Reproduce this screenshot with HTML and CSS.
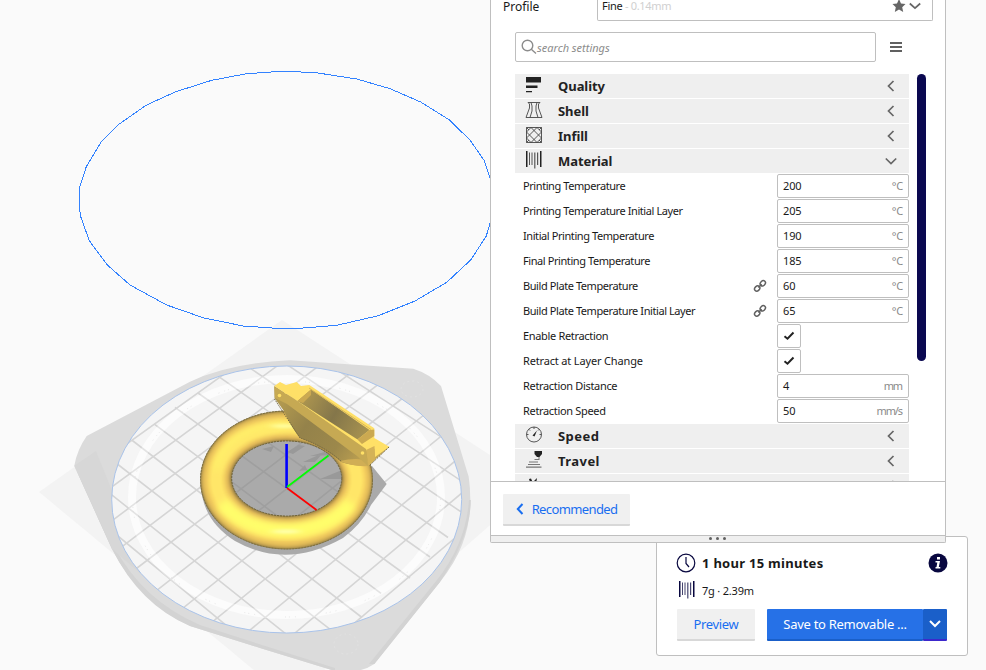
FILE: index.html
```html
<!DOCTYPE html>
<html lang="en">
<head>
<meta charset="utf-8">
<title>Print settings</title>
<link rel="stylesheet" href="styles.css">
</head>
<body>
<main class="app">
<svg class="scene" width="986" height="670" viewBox="0 0 986 670">
  <defs>
    <clipPath id="plate"><ellipse cx="286.7" cy="499.5" rx="175" ry="133.5"/></clipPath>
    <clipPath id="ring"><ellipse cx="286.5" cy="480" rx="86.3" ry="69.3"/></clipPath>
    <clipPath id="hole"><ellipse cx="286.7" cy="478.5" rx="55" ry="37.6"/></clipPath>
    <filter id="soft"><feGaussianBlur stdDeviation="1.2"/></filter>
    <filter id="softer" x="-20%" y="-40%" width="140%" height="180%"><feGaussianBlur stdDeviation="3.5"/></filter>
    <filter id="glow" x="-50%" y="-150%" width="200%" height="400%"><feGaussianBlur stdDeviation="5 1.5"/></filter>
    <linearGradient id="body" gradientUnits="userSpaceOnUse" x1="285" y1="400" x2="372" y2="462">
      <stop offset="0" stop-color="#b0984f"/><stop offset=".3" stop-color="#94824a"/><stop offset=".65" stop-color="#9c884b"/><stop offset="1" stop-color="#c7a853"/>
    </linearGradient>
    <linearGradient id="pocket" gradientUnits="userSpaceOnUse" x1="300" y1="398" x2="366" y2="436">
      <stop offset="0" stop-color="#b09850"/><stop offset=".5" stop-color="#84764a"/><stop offset="1" stop-color="#a89350"/>
    </linearGradient>
  </defs>
  <polygon fill="#f3f3f3" points="282,320 39,492 290,700 536,485"/>
  <polygon class="volume" points="79.3,188.3 86.3,166.7 101.3,141.7 119.3,124 146,105.3 175,92 211.7,80.3 246.7,73.7 276.7,71.6 292.7,71.6 316,72.7 356.7,79 390,88.7 420.7,102 449,119.7 470,140 484.3,160.7 492,184 494,200 490,223.3 486.3,236 470.7,260 446.7,282.3 415,301 378.3,315.7 336.7,325.3 303.3,328 272,328 243.3,326 204,318 166.7,305 130,285 107.3,265 89.3,240.7 80.7,216.7 79.3,206.7"/>
  <path fill="#dbdbdb" d="M74.3 465.7Q77 450 86.7 436L190 381.7Q230 363 290 360.3L413.3 368.7Q430 374 441 386L468.7 476.7Q474 515 462 545Q455 563 440 582L374.3 664Q360 674 335 671L260 648 190 626Q140 603 112 549Z"/>
  <path fill="#d3d3d3" d="M74.3 465.7L112 549Q140 605 190 626L260 648 335 671V668L262 645 200 625Q142 600 114 546Z"/>
  <path fill="#d3d3d3" d="M470.8 500Q471 535 440 582L374.3 664 369 664 437 580Q466 543 469 500Z"/>
  <polygon fill="#d7d7d7" points="74.3,465.7 96,451 148,580 112,549"/>
  <g clip-path="url(#plate)">
    <rect x="110" y="364" width="354" height="272" fill="#f5f5f5"/>
    <ellipse class="band" cx="286.5" cy="497" rx="154.500" ry="118"/>
    <g class="grid">
      <path d="M84 508L289 677.200M107 491L313.500 656M117.300 464L336.500 634.300M131.700 440L362 617.500M154 423.800L381 593.400M175 407.300L410 578M198 393L430 557M217 375.400L448 537.500M241.700 362.400L470 518M260 346.700L470 486.700M303 348L480 462"/>
      <path d="M108 457.500L254 352.700M105 491.900L285 360.200M105 526L332 356M110 555.800L370 358.400M120 581L410 360.300M130 611.300L440 369M155 630.500L460 386M190 640L470 412.800M235 642.400L475 444.700M270 654L475 482M310 660.700L480 516.800"/>
    </g>
    <ellipse class="glint" cx="286.5" cy="497" rx="154.500" ry="118"/>
    <ellipse cx="286.5" cy="499" rx="154" ry="118" fill="none" stroke="#dedede" stroke-width=".7" stroke-dasharray="1 5 1 3 1 30"/>
  </g>
  <ellipse class="plate-edge" cx="286.7" cy="499.5" rx="175" ry="133.5"/>
  <g class="marks">
    <ellipse cx="412" cy="389" rx="11" ry="8"/><ellipse cx="346" cy="644" rx="12" ry="10"/>
  </g>
  <path fill="#aaa" d="M201 485Q202 520 235 541 286 570 343 538 362 524 371 505L386.7 484 372 466Z"/>
  <g clip-path="url(#ring)">
    <rect x="199" y="409" width="175" height="142" fill="#7d7044"/>
    <g filter="url(#soft)">
      <ellipse cx="286.500" cy="480" rx="85.800" ry="68.800" fill="#bd9c4e"/>
      <ellipse cx="286.500" cy="479.900" rx="84.300" ry="67" fill="#dbb656"/>
      <ellipse cx="286.500" cy="479.900" rx="82" ry="64.500" fill="#eec65c"/>
      <ellipse cx="286.500" cy="479.800" rx="79" ry="61.500" fill="#fad862"/>
      <ellipse cx="286.500" cy="479.800" rx="76" ry="58.500" fill="#ffe667"/>
      <ellipse cx="286.500" cy="479.400" rx="64.500" ry="47" fill="#f8d762"/>
      <ellipse cx="286.500" cy="479" rx="61.500" ry="44" fill="#e8c05a"/>
      <ellipse cx="286.600" cy="478.800" rx="58.500" ry="41" fill="#c7a250"/>
      <ellipse cx="286.600" cy="478.600" rx="56.300" ry="38.700" fill="#8a7845"/>
    </g>
    <path d="M222 503Q244 530 286 530Q329 530 351 503" fill="none" stroke="#ffff6b" stroke-width="13" filter="url(#softer)"/>
    <path d="M216 470Q226 426 286 425" fill="none" stroke="#fff069" stroke-width="7" filter="url(#softer)"/>
    <ellipse cx="286" cy="531.500" rx="14" ry="2" fill="#ffffb0" filter="url(#glow)"/>
    <ellipse cx="285" cy="426" rx="14" ry="2" fill="#ffffa0" filter="url(#glow)"/>
  </g>
  <g clip-path="url(#hole)">
    <rect x="230" y="440" width="114" height="78" fill="#aaa"/>
    <g class="grid-dark"><path d="M198 393L430 557M175 407.300L410 578M217 375.400L448 537.500M154 423.800L381 593.400M120 581L410 360.300M130 611.300L440 369M110 555.800L370 358.400M155 630.500L460 386"/></g>
    <path fill="#999" d="M262 449l12-3-3 6zM287 452l12-7 6 1-12 8zM303 462l20-9-8 9zM299 471l6-6 2 5zM320 479l22-9v9zM310 456l22-6 2 5z"/>
  </g>
  <ellipse cx="286.700" cy="478.500" rx="55" ry="37.600" fill="none" stroke="#6d623b" stroke-width="1" stroke-dasharray="2 1"/>
  <ellipse cx="286.500" cy="480" rx="86" ry="69" fill="none" stroke="#7d7044" stroke-width="1" stroke-dasharray="2 1"/>
  <path fill="url(#body)" d="M274.3 386L368 449 374 448.500 389.3 446.700 368 466Q352 466 341 462 325 447 300 438 291 427 284 411L274.500 398Z"/>
  <path fill="#d0ae55" d="M340 461Q356 457 370 461L368.500 466Q352 467 340 461Z"/>
  <path fill="#ffe067" d="M274.3 386L280 382 286 385 296.700 382 301 386 309.300 385 374.300 428.300 374.300 438 389.300 446.700 375 457 374.300 448 368 452 360 446 297 401Z"/>
  <path fill="#c6a953" d="M274.3 386.500L293 398 366 449 368 466 357 456 287 404 275 398Z"/>
  <path fill="#d4b257" d="M366 450L374.500 446 375 460 368.500 466Z"/>
  <path fill="url(#pocket)" d="M297.500 401L311 389.500 369.500 430 357.500 439.500Z"/>
  <path fill="#cba951" d="M297.500 401L311 389.500V395L303 403ZM357.500 439.500L369.500 430 374.300 429.500V436L362 444Z"/>
  <path fill="none" stroke="#d9b657" d="M309 388L371 429.500"/>
  <g fill="#ffe067"><circle cx="279.500" cy="395.500" r="1.800"/><circle cx="362.500" cy="453" r="1.800"/><circle cx="287" cy="391" r="3"/></g>
  <path fill="none" stroke="#736640" stroke-dasharray="1.500 1" d="M274.500 399L300 438Q324 446 341 461M389 447L369 466"/>
  <g fill="none"><path stroke="#00f" stroke-width="2.600" d="M286.600 444V488"/><path stroke="#0f0" stroke-width="1.700" d="M287 487L328.500 455.500"/><path stroke="#f00" stroke-width="1.700" d="M287 488L316.500 510"/></g>
</svg>

<section class="job">
  <div class="job-head">
    <svg class="clock" width="20" height="20" viewBox="0 0 20 20"><circle cx="10" cy="10" r="8.800"/><path d="M10 4V10.500L13 14"/></svg>
    <strong>1 hour 15 minutes</strong>
    <svg class="info" width="20" height="20" viewBox="0 0 20 20"><circle cx="10" cy="10" r="9.500" fill="#08073f"/><path d="M9 4h3v2.500H9zM7.500 8H12l-1.200 6H12.300v1.500H7.500V14h1L9.300 9.500H7.500z" fill="#fff"/></svg>
  </div>
  <div class="job-use">
    <svg class="navy" width="18" height="18" viewBox="0 0 18 18"><use href="#spool"/></svg><span>7g · 2.39m</span>
  </div>
  <div class="job-actions">
    <button class="btn preview">Preview</button>
    <div class="save"><button class="btn save-main">Save to Removable ...</button><button class="btn save-more" aria-label="More"><svg width="12" height="8" viewBox="0 0 12 8"><path d="M1 1L6 6L11 1"/></svg></button></div>
  </div>
</section>

<section class="panel">
  <div class="profile">
    <span class="profile-label">Profile</span>
    <div class="select"><span>Fine <i>- 0.14mm</i></span>
      <svg width="30" height="14" viewBox="0 0 30 14"><path fill="#666" d="M7 0l2 4.500 4.500.5L10.200 8.200 11.200 13 7 10.500 2.800 13 3.800 8.200.5 5 5 4.500z"/><path class="chev" d="M17.800 4.500L23 9.200L28.200 4.500"/></svg></div>
  </div>
  <div class="search-row">
    <div class="search"><svg width="16" height="16" viewBox="0 0 16 16"><circle cx="6.500" cy="6.500" r="5.300"/><path d="M10.300 10.300L15 14.500"/></svg><span>search settings</span></div>
    <div class="burger"><b></b><b></b><b></b></div>
  </div>
  <div class="body">
    <div class="list">
      <div class="cat"><svg width="18" height="18" viewBox="0 0 18 18"><path fill="#222" d="M1 1h15v5.500H1zM1 9.500h11.500V12H1zM1 15h6v1.200H1z"/></svg><span>Quality</span><svg class="arrow" width="14" height="14" viewBox="0 0 14 14"><path d="M9.500 2L4.500 7L9.500 12"/></svg></div>
      <div class="cat"><svg class="line" width="18" height="18" viewBox="0 0 18 18"><path d="M3 1.500H15M3 1.500L4.500 3V7L1 16.500H5L7 10V5L6 1.500M15 1.500L13.500 3V7L17 16.500H13L11 10V5L12 1.500M5 16.500H13"/></svg><span>Shell</span><svg class="arrow" width="14" height="14" viewBox="0 0 14 14"><path d="M9.500 2L4.500 7L9.500 12"/></svg></div>
      <div class="cat"><svg class="line" width="18" height="18" viewBox="0 0 18 18"><path d="M1.500 1.500H16.500V16.500H1.500ZM1.500 6L6 1.500L16.500 12L12 16.500L1.500 6M12 1.500L16.500 6L6 16.500L1.500 12L12 1.500M1.500 1.500L4 4M16.500 1.500L14 4M1.500 16.500L4 14M16.500 16.500L14 14"/></svg><span>Infill</span><svg class="arrow" width="14" height="14" viewBox="0 0 14 14"><path d="M9.500 2L4.500 7L9.500 12"/></svg></div>
      <div class="cat"><svg width="18" height="18" viewBox="0 0 18 18"><g id="spool" fill="currentColor"><path d="M1 0h1.500v16H1zM15 0h1.500v16H15z"/><path opacity=".75" d="M4 1.500h1V14H4zM6.500 1.500h1V14h-1zM9.200 1.500h1.200V17.500H9.200zM12 1.500h1.200V14H12z"/></g></svg><span>Material</span><svg class="arrow" width="14" height="14" viewBox="0 0 14 14"><path d="M1.800 4.500L7 9.500L12.200 4.500"/></svg></div>
      <div class="row tight"><label>Printing Temperature</label><div class="field">200<em>°C</em></div></div>
      <div class="row tight"><label>Printing Temperature Initial Layer</label><div class="field">205<em>°C</em></div></div>
      <div class="row tight"><label>Initial Printing Temperature</label><div class="field">190<em>°C</em></div></div>
      <div class="row tight"><label>Final Printing Temperature</label><div class="field">185<em>°C</em></div></div>
      <div class="row tight"><label>Build Plate Temperature</label><svg class="link" width="14" height="14" viewBox="0 0 14 14"><ellipse cx="4.200" cy="9.500" rx="2.900" ry="2.300" transform="rotate(-45 4.200 9.500)"/><ellipse cx="9.800" cy="4.300" rx="2.900" ry="2.300" transform="rotate(-45 9.800 4.300)"/><path d="M5.300 8.500L8.700 5.300"/></svg><div class="field">60<em>°C</em></div></div>
      <div class="row tight"><label>Build Plate Temperature Initial Layer</label><svg class="link" width="14" height="14" viewBox="0 0 14 14"><ellipse cx="4.200" cy="9.500" rx="2.900" ry="2.300" transform="rotate(-45 4.200 9.500)"/><ellipse cx="9.800" cy="4.300" rx="2.900" ry="2.300" transform="rotate(-45 9.800 4.300)"/><path d="M5.300 8.500L8.700 5.300"/></svg><div class="field">65<em>°C</em></div></div>
      <div class="row"><label>Enable Retraction</label><div class="check"><svg width="12" height="10" viewBox="0 0 12 10"><path d="M1.500 5.200L4.500 7.700L10.500 1.500"/></svg></div></div>
      <div class="row loose"><label>Retract at Layer Change</label><div class="check"><svg width="12" height="10" viewBox="0 0 12 10"><path d="M1.500 5.200L4.500 7.700L10.500 1.500"/></svg></div></div>
      <div class="row"><label>Retraction Distance</label><div class="field">4<em class="wide">mm</em></div></div>
      <div class="row"><label>Retraction Speed</label><div class="field">50<em class="wide">mm/s</em></div></div>
      <div class="cat airy"><svg class="line" width="18" height="18" viewBox="0 0 18 18"><circle cx="9" cy="8.500" r="7.500"/><path d="M9 1V3M3.700 3.200L5 4.500M1.500 8.500H3.500M16.500 8.500H14.500M14.300 3.200L13 4.500"/><path fill="#222" stroke="none" d="M7.500 9.500L12 4.500L9.500 10.500z"/></svg><span>Speed</span><svg class="arrow" width="14" height="14" viewBox="0 0 14 14"><path d="M9.500 2L4.500 7L9.500 12"/></svg></div>
      <div class="cat airy"><svg width="18" height="18" viewBox="0 0 18 18"><path fill="#222" d="M9.500 0H17v3l-2.500 3h-2.500l-2.500-3z"/><path fill="#777" d="M9.500 8h4V6h1v3h-5zM4 10.500h9v1H4zM3 13h12v1H3zM1 15.500h15.500v1.200H1z"/></svg><span>Travel</span><svg class="arrow" width="14" height="14" viewBox="0 0 14 14"><path d="M9.500 2L4.500 7L9.500 12"/></svg></div>
      <div class="cat"><svg width="18" height="18" viewBox="0 0 18 18"><path fill="#222" d="M4 3l2-.5 2 4.500v2H6zM9 5l3-3-.5 3L10 8z"/></svg><span></span><svg class="arrow" width="14" height="14" viewBox="0 0 14 14"><path d="M9.500 2L4.500 7L9.500 12"/></svg></div>
    </div>
    <div class="scroll"></div>
  </div>
  <div class="foot"><button class="btn back"><svg width="8" height="12" viewBox="0 0 8 12"><path d="M6.500 1L1.800 6L6.500 11"/></svg>Recommended</button></div>
  <div class="grip"><b></b><b></b><b></b></div>
</section>
</main>
</body>
</html>
```

FILE: styles.css
```css
* { box-sizing: border-box; }
body { margin: 0; overflow: hidden; background: #fafafa; font-family: "Noto Sans", sans-serif; color: #191919; }
.app { position: relative; width: 986px; height: 670px; overflow: hidden; }
svg { display: block; flex: none; }
.scene { position: absolute; left: 0; top: 0; }
.volume { fill: none; stroke: #3282ff; stroke-width: 1; shape-rendering: crispEdges; }
.band { fill: none; stroke: #fafafa; stroke-width: 8; }
.glint { fill: none; stroke: #fff; stroke-opacity: .35; stroke-width: 8; }
.grid { fill: none; stroke: #d5d5d5; stroke-width: 1.6; }
.grid-dark { fill: none; stroke: #9f9f9f; stroke-width: 1.6; }
.plate-edge { fill: none; stroke: #a9c3ea; stroke-width: 1; }
.marks { fill: none; stroke: #e2e2e2; stroke-width: .8; stroke-dasharray: 2 3; }

.btn { border: 0; padding: 0; border-radius: 1px; background: #f0f0f0; border-bottom: 2px solid #d8d8d8; color: #196ef0; font: 13px "Noto Sans", sans-serif; height: 32px; display: flex; align-items: center; justify-content: center; }
.btn svg, .chev, .arrow { fill: none; stroke: #196ef0; stroke-width: 2; }

.job { position: absolute; left: 656px; top: 536px; width: 312px; height: 120px; background: #fff; border: 1px solid #bfbfbf; border-radius: 3px; padding: 16px 20px 0; }
.job-head { display: flex; align-items: center; height: 20px; margin: 0 -1px; }
.job-head strong { font-size: 13px; margin-left: 6px; flex: 1; letter-spacing: .28px; }
.clock { fill: none; stroke: #08073f; stroke-width: 1.2; }
.job-use { display: flex; align-items: center; height: 18px; margin-top: 8px; font-size: 11px; letter-spacing: -.2px; }
.navy { color: #08073f; margin-left: 1px; }
.job-use span { margin-left: 6px; }
.job-actions { display: flex; justify-content: space-between; margin-top: 10px; }
.preview { width: 78px; letter-spacing: -.35px; }
.save { display: flex; width: 180px; }
.save-main { width: 156px; background: #2671e7; border-color: #1a5fc9; color: #fff; letter-spacing: -.28px; }
.save-more { width: 24px; background: #1a5fc9; border-color: #3c28cc; }
.save-more svg { stroke: #fff; }

.panel { position: absolute; left: 490px; top: 0; width: 456px; height: 543px; background: #fff; border: 1px solid #bfbfbf; border-top: 0; border-radius: 0 0 2px 2px; display: flex; flex-direction: column; }
.profile { display: flex; height: 21px; padding-left: 12px; }
.profile-label { width: 94px; font-size: 12px; line-height: 13px; }
.select { width: 336px; height: 21px; border: 1px solid #bfbfbf; border-top: 0; border-radius: 0 0 2px 2px; display: flex; justify-content: space-between; padding: 0 10px 0 4px; font-size: 11px; line-height: 13px; letter-spacing: -.3px; }
.select span { margin-top: -1px; }
.select i { font-style: normal; color: #d0d0d0; }
.select svg { margin-top: -1px; }
.chev, .arrow { stroke: #666; stroke-width: 1.7; }
.search-row { display: flex; align-items: center; margin: 11px 0 0 24px; }
.search { width: 361px; height: 30px; border: 1px solid #bfbfbf; border-radius: 2px; display: flex; align-items: center; padding-left: 5px; font-size: 11px; font-style: italic; color: #8c8c8c; }
.search svg { fill: none; stroke: #8c8c8c; stroke-width: 1.4; }
.burger { width: 12px; margin-left: 14px; display: grid; gap: 2px; }
.burger b { height: 2px; background: #606060; }
.body { display: flex; height: 407px; margin-top: 12px; padding-left: 24px; flex: none; }
.list { width: 394px; overflow: hidden; }
.cat { height: 24px; margin-bottom: 1px; background: #efefef; display: flex; align-items: center; padding: 0 11px 0 10px; font-size: 13px; font-weight: bold; color: #222; }
.cat span { flex: 1; margin-left: 15px; letter-spacing: -.05px; }
.airy span { letter-spacing: .45px; }
.cat > svg:first-child { margin-top: -2px; }
.line { fill: none; stroke: #444; stroke-width: .9; }
.row { height: 25px; display: flex; align-items: flex-start; padding-left: 8px; font-size: 11px; line-height: 24px; }
.row label { flex: 1; letter-spacing: -.33px; }
.tight label { letter-spacing: -.42px; }
.loose label { letter-spacing: -.16px; }
.link { fill: none; stroke: #606060; stroke-width: 1.5; margin: 5px 10px 0 0; }
.field { width: 132px; height: 24px; border: 1px solid #bfbfbf; border-radius: 2px; padding: 0 5px; display: flex; align-items: center; justify-content: space-between; line-height: 22px; letter-spacing: -.15px; }
.field em { font-style: normal; color: #8a8a8a; }
.field .wide { letter-spacing: -1.1px; margin-right: 1px; }
.check { width: 24px; height: 24px; margin-right: 108px; border: 1px solid #bfbfbf; border-radius: 2px; display: grid; place-items: center; }
.check svg { fill: none; stroke: #222; stroke-width: 2; }
.scroll { width: 9px; height: 287px; margin-left: 8px; border-radius: 5px; background: #0a0850; }
.foot { height: 54px; border-top: 1px solid #bfbfbf; padding: 12px; flex: none; }
.back { width: 127px; gap: 8px; letter-spacing: -.62px; }
.grip { flex: 1; background: #efefef; border-top: 1px solid #bfbfbf; display: flex; align-items: center; justify-content: center; gap: 4px; padding: 0 2px 1px 0; }
.grip b { width: 3px; height: 3px; border-radius: 50%; background: #606060; }
```
